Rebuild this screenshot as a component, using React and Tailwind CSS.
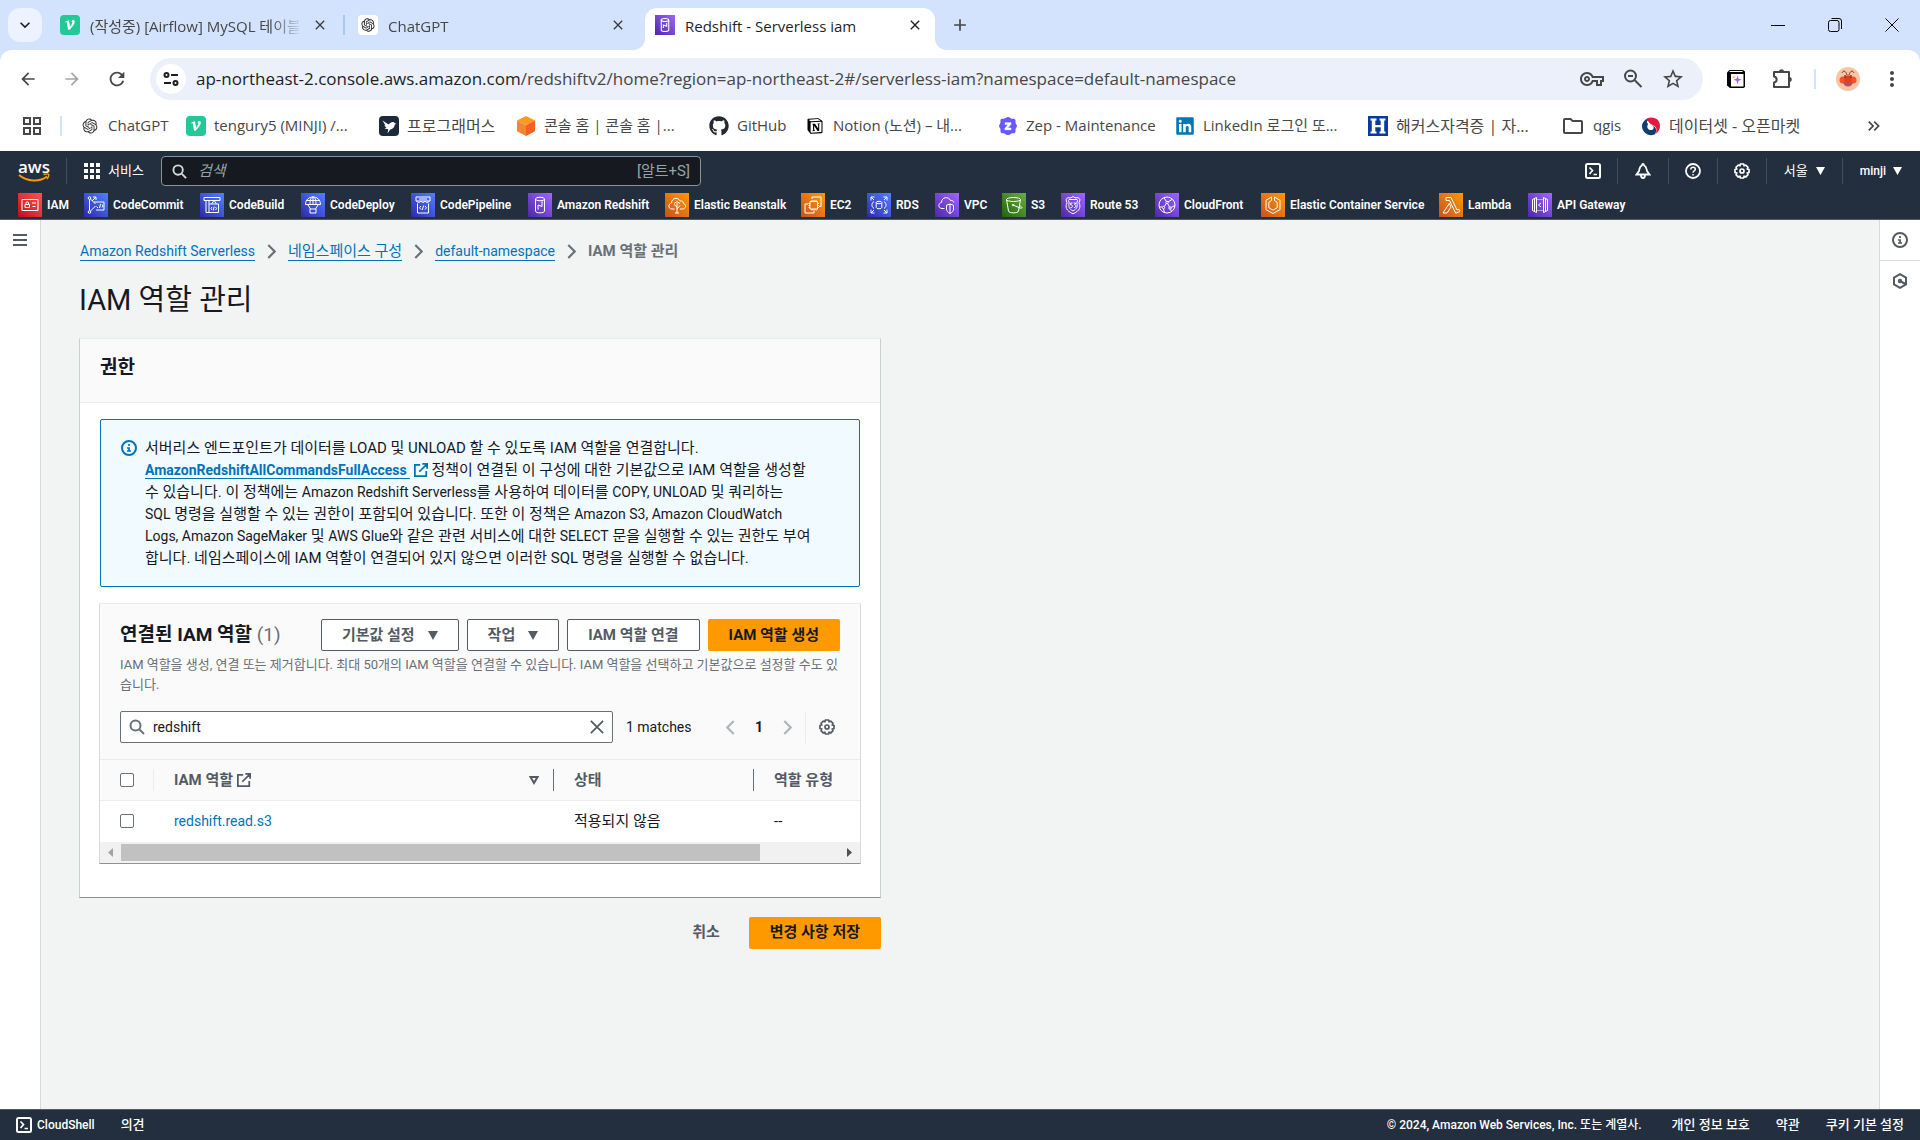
import React, { useState } from "react";
import { FaGithub, FaLinkedin } from "react-icons/fa";
import { RiNotionFill, RiOpenaiFill } from "react-icons/ri";
import {
  MdAdd,
  MdArrowBack,
  MdArrowForward,
  MdClose,
  MdKeyboardArrowDown,
  MdKeyboardDoubleArrowRight,
  MdMoreVert,
  MdOutlineFolder,
  MdOutlineVpnKey,
  MdRefresh,
  MdStarOutline,
} from "react-icons/md";

/* ---------- favicons ---------- */

const Velog = () => (
  <span className="flex size-5 shrink-0 items-center justify-center rounded-sm bg-[#20c997]">
    <svg viewBox="0 0 20 20" className="size-5" fill="#fff">
      <path d="M5.6 6.2 9 5.2l1 6.600c1.700-2 2.500-3.600 2.300-4.500-.1-.5-.5-.8-.8-1.100.3-.8 1-1.200 1.800-1.200 1 0 1.600.7 1.500 1.800-.2 2.100-2.200 5.200-5.100 7.900H8L6.800 7.300l-1.400.2z" />
    </svg>
  </span>
);

const RedshiftIcon = () => (
  <span className="flex size-5 shrink-0 items-center justify-center bg-linear-to-tr from-[#4d27a8] to-[#a166ff]">
    <svg viewBox="0 0 24 24" className="size-5" fill="none" stroke="#fff" strokeWidth="1.300">
      <ellipse cx="12" cy="6" rx="4.500" ry="1.800" />
      <path d="M7.500 6v12c0 2.500 9 2.500 9 0V6M10 15.500V12l4 1.500V9.500" />
    </svg>
  </span>
);

const Programmers = () => (
  <span className="flex size-5 shrink-0 items-center justify-center rounded-sm bg-[#1e2a3c]">
    <svg viewBox="0 0 20 20" className="size-5" fill="#fff">
      <path d="m3.500 4.500 6 4C11 7 12 6 14 6c1 0 1.500.6 1.700 1.300l1.800.5-1.700.7c-.2 3-2.300 4.500-4.600 4.900L8.500 17.500l.8-4.200-3.800-.8 2-1L5 9.500h1.500z" />
    </svg>
  </span>
);

const Cube = () => (
  <svg viewBox="0 0 20 20" className="size-5 shrink-0">
    <path d="m10 0 9 4.500-9 4.700-9-4.700z" fill="#ff9a1f" />
    <path d="M1 4.500 10 9.200V20l-9-4.700z" fill="#f58536" />
    <path d="M19 4.500 10 9.200V20l9-4.700z" fill="#f26322" />
  </svg>
);

const Zep = () => (
  <svg viewBox="0 0 20 20" className="size-5 shrink-0">
    <path
      d="M10 1c1.500 0 2.400 1.500 3.500 1.700 1.200.2 2.700-.3 3.600.7.900 1.100.2 2.500.5 3.700.3 1 1.400 1.800 1.400 3s-1.100 1.900-1.400 3c-.3 1.100.3 2.700-.6 3.600-1 1-2.400.4-3.500.7-1 .3-2 1.600-3.500 1.600s-2.500-1.300-3.500-1.600c-1.100-.3-2.600.3-3.500-.7-.9-1-.300-2.500-.6-3.600C2.100 12 1 11.200 1 10s1.100-2 1.400-3c.300-1.200-.4-2.600.5-3.700.9-1 2.400-.5 3.600-.7C7.600 2.500 8.500 1 10 1z"
      fill="#6758ff"
    />
    <path d="M7 6.700h6v1.500L9.600 12H13v1.700H6.900v-1.500l3.500-3.800H7z" fill="#fff" stroke="#fff" strokeWidth=".6" />
  </svg>
);

const Hackers = () => (
  <svg viewBox="0 0 20 20" className="size-5 shrink-0">
    <path d="M0 0h20v20H0z" fill="#0a3b9c" />
    <path d="M2.500 2.500h6v2H7.300V9h5.400V4.500h-1.200v-2h6v2h-1.300v11h1.300v2h-6v-2h1.200v-4.300H7.300v4.300h1.200v2h-6v-2h1.300v-11H2.500z" fill="#fff" />
  </svg>
);

const OpenMarket = () => (
  <svg viewBox="0 0 20 20" className="size-5 shrink-0">
    <path d="M4 4C8.500-.5 19 1 19 10c0 3.500-2 6.500-4.500 8 2-4 1-8-3-9-3.500-1-3.500-5-7.500-5z" fill="#e4193c" />
    <path d="M1 10c0-3 2-6.500 6-6.500-1.500 1.500-1.500 4.500 1.500 5 3.500.6 5.500 2 6.500 4.500.6 2-.3 4.500-1.500 5.500C7 21 1 16 1 10z" fill="#0f3e71" />
    <path d="M7.500 7.500c-1.800 2-1.500 5 .7 6.200 2 1 4.300 0 4.500-2 .1-1.600-1.200-2.700-3-3.200-.9-.2-1.700-.4-2.200-1z" fill="#fff" />
  </svg>
);

const bookmarks = [
  { label: "ChatGPT", icon: <RiOpenaiFill className="size-5 shrink-0 p-px text-[#333]" />, width: "w-[106px]" },
  { label: "tengury5 (MINJI) /...", icon: <Velog />, width: "w-[193px]" },
  { label: "프로그래머스", icon: <Programmers />, width: "w-[137px] text-[16px]" },
  { label: "콘솔 홈 | 콘솔 홈 |...", icon: <Cube />, width: "w-[193px]" },
  { label: "GitHub", icon: <FaGithub className="size-5 shrink-0 text-[#24292f]" />, width: "w-[96px]" },
  { label: "Notion (노션) – 내...", icon: <RiNotionFill className="size-5 shrink-0 text-black" />, width: "w-[193px]" },
  { label: "Zep - Maintenance", icon: <Zep />, width: "w-[177px]" },
  { label: "LinkedIn 로그인 또...", icon: <FaLinkedin className="size-5 shrink-0 text-[#0077b5]" />, width: "w-[193px]" },
  { label: "해커스자격증 | 자...", icon: <Hackers />, width: "w-[193px] text-[16px]" },
  { label: "qgis", icon: <MdOutlineFolder className="size-6 shrink-0 text-[#474747]" />, width: "w-[80px]" },
  { label: "데이터셋 - 오픈마켓", icon: <OpenMarket />, width: "w-[190px] text-[16px]" },
];

/* ---------- service icons, 24x24 white line art ---------- */

const red = "bg-linear-to-tr from-[#bd0816] to-[#ff5252]";
const blue = "bg-linear-to-tr from-[#2e27ad] to-[#527fff]";
const purple = "bg-linear-to-tr from-[#4d27a8] to-[#a166ff]";
const orange = "bg-linear-to-tr from-[#c8511b] to-[#ff9900]";
const green = "bg-linear-to-tr from-[#1b660f] to-[#6cae3e]";

const services = [
  {
    label: "IAM", color: red, width: "w-[66px]",
    art: <><path d="M4 6.500h16v11H4zM14 10h4M14.500 13.500h3M7 11.500h4.500v3H7z" /><path d="M8 11.500V10c0-1.500 2.500-1.500 2.500 0v1.500" /></>,
  },
  {
    label: "CodeCommit", color: blue, width: "w-[116px]",
    art: <><circle cx="5.500" cy="5" r="1.300" /><circle cx="5.500" cy="19" r="1.300" /><path d="M5.500 6.500v11M6.500 6l5 5M6.500 18l5-5M9 4h3v3M12 4 8 8M10 9h10v8H12M14 15l-1.500-1.500M15.500 15l1-4M18 11.500l1 1.500-1 1.500" /></>,
  },
  {
    label: "CodeBuild", color: blue, width: "w-[101px]",
    art: <path d="M4 4.500h16v3H4zM6 7.500v12h3v-12M9 11h9.500v8.500H9M11.500 11l2.500-3.500 2.500 3.500M12 14l-1 1.500 1 1.500M15.500 14l1 1.500-1 1.500M14.200 13.500l-1 4" />,
  },
  {
    label: "CodeDeploy", color: blue, width: "w-[110px]",
    art: <path d="M4.500 11.500c0-10 15-10 15 0zM9 11.500c0-5 1-7.500 3-7.500s3 2.500 3 7.500M12 4v7.500M6 7.500h12M7 12l2.500 4M17 12l-2.500 4M9 16h6v4H9z" />,
  },
  {
    label: "CodePipeline", color: blue, width: "w-[117px]",
    art: <path d="M5 4h14v4H5zM8 6h8M6 8c0 2 3 2 4 0 1 2 3 2 4 0 1 2 4 2 4 0M6.500 10.500V20h11v-9.500M10 13l-1.500 1.800L10 16.500M14 13l1.500 1.800L14 16.500M12.700 12.500l-1.500 4.500" />,
  },
  {
    label: "Amazon Redshift", color: purple, width: "w-[137px]",
    art: <><ellipse cx="12" cy="6" rx="4.500" ry="1.800" /><path d="M7.500 6v12c0 2.500 9 2.500 9 0V6M10 15.500V12l4 1.500V9.500M9.500 16h1.500M13.500 9h1.500" /></>,
  },
  {
    label: "Elastic Beanstalk", color: orange, width: "w-[136px]",
    art: <path d="M9.500 16H7c-4 0-4-5.500-.5-6 0-5 6.500-6.500 8.500-2 2-.5 3.500.5 3.500 2.500 3 1 2.500 5.500-1 5.500h-2.500M12 20V9.500M12 14l-3-2.500M12 16l3-3.500M9 10.500l3-2 3 2M10 20h4" />,
  },
  {
    label: "EC2", color: orange, width: "w-[66px]",
    art: <><path d="M9 8.500h7.500V16H9z" /><path d="M11 7v1.500M13 7v1.500M15 7v1.500M11 16v1.500M13 16v1.500M15 16v1.500M7.500 10.500H9M7.500 12.500H9M7.500 14.500H9M16.500 10.500H18M16.500 12.500H18M16.500 14.500H18M7 11H4v9h9v-2M11 6V4h9v9.500h-2" /></>,
  },
  {
    label: "RDS", color: blue, width: "w-[68px]",
    art: <><ellipse cx="12" cy="9.500" rx="2.800" ry="1.200" /><path d="M9.200 9.500v5c0 1.700 5.600 1.700 5.600 0v-5M4 7.500V4h3.500M4 4l3 3M16.500 4H20v3.500M20 4l-3 3M4 16.500V20h3.500M4 20l3-3M20 16.500V20h-3.500M20 20l-3-3M7 8.500c-2.500 1.500-3 5 0 7M17 8.500c2.500 1.500 3 5 0 7" /></>,
  },
  {
    label: "VPC", color: purple, width: "w-[67px]",
    art: <path d="M9.500 15.500H7c-4 0-4-5.500-.5-6C6.500 4 13.500 3 15.500 7.500c1.800-.3 3 .5 3.300 2M15 11l3.500 1.200v3.800c0 2-1.500 3.500-3.500 4.500-2-1-3.500-2.500-3.500-4.500v-3.800zM15 11v9" />,
  },
  {
    label: "S3", color: green, width: "w-[59px]",
    art: <><ellipse cx="11.500" cy="6.500" rx="7" ry="2" /><path d="M4.500 6.500 6.500 18c.5 2.500 9.500 2.500 10 0l2-11.500M11 12l7 3c3 .8 2.500-1-.5-2.500" /><circle cx="11" cy="12" r=".8" /></>,
  },
  {
    label: "Route 53", color: purple, width: "w-[94px]",
    art: <><path d="m12 3.500 2 1.300h3.500l1.500 2-1 3c2 4 1 8-6 11-7-3-8-7-6-11l-1-3 1.500-2H10z" /><path d="M12 6.500h4l.5 1-.7 2.500c1.200 3.500 0 6-3.800 8-3.800-2-5-4.500-3.800-8L7.500 7.500l.5-1zM11.500 10H9.700v2c2.500-.3 2.300 3-.2 2.500M12.700 10h2l-1 1.700c2 .3 1.500 3-.8 2.800" /></>,
  },
  {
    label: "CloudFront", color: purple, width: "w-[106px]",
    art: <><circle cx="12" cy="12" r="8" /><circle cx="12" cy="9.500" r="1.200" /><circle cx="8.500" cy="14.500" r="1.200" /><circle cx="15" cy="15" r="1.200" /><path d="m11.300 10.500-2 3M12.700 10.500l1.800 3.500M8.500 16l1 3.500M15.500 16.200l1 2.500M7 14H4.500M13 9l4-2.500M11.500 8.500 9 5M16 14.500l3.800-2" /></>,
  },
  {
    label: "Elastic Container Service", color: orange, width: "w-[178px]",
    art: <path d="M10.500 4 5 7.300v9.400l7 3.800 7-3.800V7.300L13.500 4v3.500l2.700 1.800v5.400L12 17.200l-4.200-2.500V9.300l2.700-1.800z" />,
  },
  {
    label: "Lambda", color: orange, width: "w-[89px]",
    art: <path d="M7 4.500h5l6 12.500 2-.8.700 2.500-4 1.500L10.500 7.500H7zM10.300 10.500 4 20h4l4-6z" />,
  },
  {
    label: "API Gateway", color: purple, width: "w-[97px]",
    art: <path d="M4.500 6.500 8.500 4.500v15l-4-2zM6.500 6v12M19.500 6.500l-4-2v15l4-2zM17.500 6v12M9.500 6.500h1M11.500 6.500h1M13.500 6.500h1M9.500 17.500h1M11.500 17.500h1M13.500 17.500h1M13 10l-2.500 2 2.500 2" />,
  },
];

/* ---------- console icons, 16x16 ---------- */

const Icon = ({ className = "size-4", children }) => (
  <svg viewBox="0 0 16 16" className={`shrink-0 ${className}`} fill="none" stroke="currentColor" strokeWidth="2">
    {children}
  </svg>
);

const InfoIcon = ({ className }) => (
  <Icon className={className}>
    <circle cx="8" cy="8" r="7" />
    <path d="M8 11V8H6M10 11H6M8 6V4" strokeWidth="1.700" />
  </Icon>
);

const External = () => (
  <Icon className="inline-block size-[14px] align-[-2px]">
    <path d="M14 9v6H1V2h6M9.500 1H15v5.500M6 10l8.500-8.500" />
  </Icon>
);

const Search = ({ className }) => (
  <Icon className={className}>
    <circle cx="6.500" cy="6.500" r="5" />
    <path d="m10.500 10.500 4.500 4.500" />
  </Icon>
);

const ShellIcon = () => (
  <Icon className="size-4">
    <rect x="1" y="1" width="14" height="14" rx="1.500" />
    <path d="m4.500 4.500 3 3-3 3.500M8.500 11.500H12" strokeWidth="1.700" />
  </Icon>
);

const Gear = () => (
  <Icon className="size-4">
    <path
      d="M6.500 1h3l.6 1.600 1.700-.5 2.100 2.100-.6 1.700L15 6.500v3l-1.700.6.600 1.700-2.100 2.100-1.700-.6L9.500 15h-3l-.6-1.700-1.700.6-2.100-2.100.6-1.700L1 9.500v-3l1.700-.6-.6-1.700 2.100-2.100 1.700.5z"
      strokeWidth="1.700"
    />
    <circle cx="8" cy="8" r="2" strokeWidth="1.700" />
  </Icon>
);

const Caret = ({ className = "w-[10px]" }) => (
  <svg viewBox="0 0 10 9" className={`shrink-0 ${className}`} fill="currentColor">
    <path d="M0 0h10L5 9z" />
  </svg>
);

const Chevron = ({ left }) => (
  <svg viewBox="0 0 8 14" className="h-[15px] w-[9px] shrink-0" fill="none" stroke="currentColor" strokeWidth="2">
    <path d={left ? "M7 1 1 7l6 6" : "m1 1 6 6-6 6"} />
  </svg>
);

/* ---------- browser ---------- */

const Tab = ({ icon, title, className }) => (
  <div className={`flex items-center ${className}`}>
    {icon}
    <span className="ml-[10px] w-[212px] overflow-hidden pt-[2px] text-[15px] whitespace-nowrap text-[#474747] mask-r-from-85%">
      {title}
    </span>
    <button aria-label="탭 닫기" className="ml-[10px] text-[#3c3c3c]">
      <MdClose className="size-4" />
    </button>
  </div>
);

const TabStrip = () => (
  <div className="flex h-[50px] items-center pl-2 text-[#1f1f1f]">
    <button aria-label="탭 검색" className="flex size-[34px] items-center justify-center rounded-xl bg-[#ecf2fe]">
      <MdKeyboardArrowDown className="size-5" />
    </button>
    <Tab icon={<Velog />} title="(작성중) [Airflow] MySQL 테이블" className="ml-[18px] w-[283px]" />
    <div className="h-5 w-[2px] bg-[#a8c7fa]" />
    <Tab
      icon={
        <span className="flex size-5 shrink-0 items-center justify-center rounded-sm bg-white">
          <RiOpenaiFill className="size-4" />
        </span>
      }
      title="ChatGPT"
      className="ml-[13px] w-[287px]"
    />
    <div className="relative mt-2 flex h-[42px] w-[290px] items-center rounded-t-xl bg-white pb-2 pl-[10px]">
      <svg viewBox="0 0 12 12" className="absolute bottom-0 -left-3 size-3" fill="#fff">
        <path d="M12 0v12H0C7 12 12 7 12 0z" />
      </svg>
      <svg viewBox="0 0 12 12" className="absolute -right-3 bottom-0 size-3" fill="#fff">
        <path d="M0 0v12h12C5 12 0 7 0 0z" />
      </svg>
      <RedshiftIcon />
      <span className="ml-[10px] flex-1 pt-[2px] text-[15px] whitespace-nowrap">Redshift - Serverless iam</span>
      <button aria-label="탭 닫기" className="mr-3">
        <MdClose className="size-4" />
      </button>
    </div>
    <button aria-label="새 탭" className="ml-[15px] text-[#474747]">
      <MdAdd className="size-5" />
    </button>
    <div className="ml-auto flex items-center">
      <button aria-label="최소화" className="flex w-[57px] justify-center">
        <svg viewBox="0 0 14 14" className="size-[14px]" stroke="#000"><path d="M0 7.500h14" /></svg>
      </button>
      <button aria-label="이전 크기로" className="flex w-[57px] justify-center">
        <svg viewBox="0 0 14 14" className="size-[14px]" fill="none" stroke="#000">
          <rect x=".5" y="2.500" width="10.500" height="11" rx="2" />
          <path d="M3.500.5H11a2.500 2.500 0 0 1 2.500 2.500v8" />
        </svg>
      </button>
      <button aria-label="닫기" className="flex w-[57px] justify-center">
        <svg viewBox="0 0 14 14" className="size-[14px]" stroke="#000"><path d="m.5.5 13 13m0-13-13 13" /></svg>
      </button>
    </div>
  </div>
);

const Toolbar = () => (
  <div className="flex h-[58px] items-center pr-4 pl-[18px] text-[#474747]">
    <button aria-label="뒤로"><MdArrowBack className="size-5" /></button>
    <button aria-label="앞으로" className="ml-6 text-[#a5a5a5]"><MdArrowForward className="size-5" /></button>
    <button aria-label="새로고침" className="ml-6"><MdRefresh className="size-[22px]" /></button>
    <div className="ml-[22px] flex h-[42px] flex-1 items-center rounded-full bg-[#ebf0fa] pr-[18px] pl-1.5">
      <button aria-label="사이트 정보" className="flex size-[30px] items-center justify-center rounded-full bg-white">
        <svg viewBox="0 0 16 16" className="size-4" fill="none" stroke="#1f1f1f" strokeWidth="2">
          <circle cx="3.500" cy="4" r="2" />
          <path d="M8 4h7M1 12h7" />
          <circle cx="12.500" cy="12" r="2" />
        </svg>
      </button>
      <p className="ml-[10px] flex-1 text-[17px] whitespace-nowrap">
        <span className="text-[#1f1f1f]">ap-northeast-2.console.aws.amazon.com</span>
        /redshiftv2/home?region=ap-northeast-2#/serverless-iam?namespace=default-namespace
      </p>
      <button aria-label="비밀번호"><MdOutlineVpnKey className="size-6" /></button>
      <button aria-label="축소" className="ml-[17px]">
        <svg viewBox="0 0 24 24" className="size-6" fill="none" stroke="currentColor" strokeWidth="2">
          <circle cx="9.500" cy="9" r="5.500" />
          <path d="m13.500 13 7 7M7 9h5" />
        </svg>
      </button>
      <button aria-label="북마크" className="ml-4"><MdStarOutline className="size-6" /></button>
    </div>
    <button aria-label="Notion 클리퍼" className="ml-[23px]">
      <svg viewBox="0 0 20 20" className="size-5">
        <path d="M1 3.500 3.500 1H17l2 1.500V18l-1.500 1H4l-3-2.500z" fill="#000" />
        <path d="M5 5h12.500v12.500H5zM3 2.800 4 2h12l1.200 1H5z" fill="#fff" />
        <path d="m11.500 6.500 1 3.300 3.200 1-3.200 1-1 3.700-1-3.700-3.200-1 3.200-1z" fill="#a05cf0" />
        <path d="m8 6 .5 1.500L10 8l-1.500.5L8 10l-.5-1.500L6 8l1.500-.5z" fill="#f6b24a" />
      </svg>
    </button>
    <button aria-label="확장 프로그램" className="ml-6">
      <svg viewBox="0 0 24 24" className="size-6" fill="none" stroke="currentColor" strokeWidth="2" strokeLinejoin="round">
        <path d="M4 5h15v15H4v-4.500c3.500-.5 3.500-5.500 0-6z" />
        <path d="M9 4.500c0-3 5-3 5 0zM19.500 10c3 0 3 5 0 5z" fill="currentColor" stroke="none" />
      </svg>
    </button>
    <div className="ml-5 h-5 w-[2px] bg-[#d3e3fd]" />
    <button aria-label="프로필" className="ml-5">
      <svg viewBox="0 0 24 24" className="size-6">
        <circle cx="12" cy="12" r="12" fill="#f6c5a4" />
        <path d="M11 8C9.500 3 7 3.500 6 6M13 8c1.500-5 4-4.500 5-2" stroke="#6b3a2a" fill="none" />
        <circle cx="7" cy="13" r="3.500" fill="#f4502c" />
        <circle cx="17" cy="13" r="3.500" fill="#f4502c" />
        <path d="M7 15c1 6 9 6 10 0z" fill="#b0525a" />
        <circle cx="12" cy="12" r="3.800" fill="#ea3a20" />
        <path d="M9 8v3M15 8v3" stroke="#4a2018" />
      </svg>
    </button>
    <button aria-label="메뉴" className="ml-5"><MdMoreVert className="size-6" /></button>
  </div>
);

const Bookmarks = () => (
  <nav className="flex h-[43px] items-center pr-9 pb-2 pl-[22px] text-[15px] text-[#474747]">
    <button aria-label="앱">
      <svg viewBox="0 0 20 20" className="size-5" fill="none" stroke="#474747" strokeWidth="2">
        <path d="M2 2h6v6H2zM12 2h6v6h-6zM2 12h6v6H2zM12 12h6v6h-6z" />
      </svg>
    </button>
    <div className="mr-[18px] ml-[18px] h-5 w-[2px] bg-[#d3e3fd]" />
    {bookmarks.map((b) => (
      <a key={b.label} href="#" className={`flex shrink-0 items-center gap-2 whitespace-nowrap ${b.width}`}>
        {b.icon}
        {b.label}
      </a>
    ))}
    <button aria-label="북마크 더보기" className="ml-auto"><MdKeyboardDoubleArrowRight className="size-5" /></button>
  </nav>
);

/* ---------- aws console ---------- */

const NavDivider = () => <div className="h-[26px] w-px bg-[#414d5c]" />;

const ConsoleHeader = () => (
  <header className="border-b border-[#545b64] bg-[#232f3e] text-white">
    <div className="flex h-10 items-center px-[18px]">
      <a href="#" aria-label="aws" className="w-[32px] text-center font-['Open_Sans'] text-[17px] leading-3 font-semibold">
        aws
        <svg viewBox="0 0 32 9" className="w-8" fill="none" stroke="#ff9900" strokeWidth="2">
          <path d="M1 2c8 7 21 7 28 1.500" />
          <path d="M25.500 1.500c3-.8 5-.6 5.200 0S30.500 4 29 6" strokeWidth="1.500" />
        </svg>
      </a>
      <div className="mr-[17px] ml-4"><NavDivider /></div>
      <button className="flex items-center gap-2 text-[13px] whitespace-nowrap">
        <svg viewBox="0 0 16 16" className="size-4" fill="#fff">
          <path d="M0 0h4v4H0zM6 0h4v4H6zM12 0h4v4h-4zM0 6h4v4H0zM6 6h4v4H6zM12 6h4v4h-4zM0 12h4v4H0zM6 12h4v4H6zM12 12h4v4h-4z" />
        </svg>
        서비스
      </button>
      <label className="ml-[17px] flex h-[30px] w-[540px] items-center rounded-sm border border-[#879596] bg-[#16191f] px-[10px]">
        <Search className="size-[15px] text-[#d5dbdb]" />
        <input
          type="search"
          aria-label="검색"
          placeholder="검색"
          className="ml-[11px] min-w-0 flex-1 bg-transparent text-[15px] outline-none placeholder:text-[#95a5a6] placeholder:italic"
        />
        <span className="text-[15px] text-[#95a5a6]">[알트+S]</span>
      </label>
      <div className="ml-auto flex items-center">
        <button aria-label="CloudShell" className="mr-4"><ShellIcon /></button>
        <NavDivider />
        <button aria-label="알림" className="mx-[17px]">
          <Icon>
            <path d="M8 1c.8 0 1 .8 1.200 1.500C11.500 3.500 11.500 6 12 8l2.500 3.500h-13L4 8c.5-2 .5-4.500 2.800-5.500C7 1.800 7.200 1 8 1zM6 12c0 4 4 4 4 0" strokeWidth="1.800" />
          </Icon>
        </button>
        <NavDivider />
        <button aria-label="도움말" className="mx-4">
          <Icon>
            <circle cx="8" cy="8" r="7" strokeWidth="1.800" />
            <path d="M5.800 6.500c0-3 4.500-2.800 4.500-.2C10.300 8 8 7.800 8 9.700M8 11v1.500" strokeWidth="1.500" />
          </Icon>
        </button>
        <NavDivider />
        <button aria-label="설정" className="mx-4"><Gear /></button>
        <NavDivider />
        <button className="mx-[17px] flex items-center gap-2 text-[13px]">서울 <Caret className="w-[9px]" /></button>
        <NavDivider />
        <button className="ml-[17px] flex items-center gap-[7px] text-[12px] font-medium">minji <Caret className="w-[9px]" /></button>
      </div>
    </div>
    <nav className="flex h-7 items-center pl-[18px] text-[12px] font-semibold">
      {services.map((s) => (
        <a key={s.label} href="#" className={`flex shrink-0 items-center gap-[5px] whitespace-nowrap ${s.width}`}>
          <svg viewBox="0 0 24 24" className={`size-6 shrink-0 ${s.color}`} fill="none" stroke="#fff" strokeWidth="1">
            {s.art}
          </svg>
          {s.label}
        </a>
      ))}
    </nav>
  </header>
);

const Crumb = ({ children }) => (
  <>
    <a href="#" className="border-b border-[#0073bb] leading-[18px] text-[#0073bb]">{children}</a>
    <span className="text-[#687078]"><Chevron /></span>
  </>
);

const secondary = "flex h-8 items-center rounded-xs border border-[#545b64] bg-white px-5 text-[15px] font-bold text-[#545b64]";
const primary = "flex h-8 items-center rounded-xs bg-[#ff9900] px-[21px] text-[15px] font-bold text-[#16191f]";

const Checkbox = ({ label }) => (
  <input
    type="checkbox"
    aria-label={label}
    className="block size-[14px] appearance-none rounded-xs border border-[#687078] bg-white checked:bg-[#0073bb]"
  />
);

const RolesTable = () => {
  const [query, setQuery] = useState("redshift");

  return (
    <section className="-mx-px mt-4 border border-x-[#d5dbdb] border-t-[#eaeded] border-b-[#879596]">
      <div className="bg-[#fafafa] px-5 pt-[15px] pb-4">
        <div className="flex items-center gap-2 whitespace-nowrap">
          <h3 className="flex-1 text-[19px] leading-7 font-bold">
            연결된 IAM 역할 <span className="font-normal text-[#687078]">(1)</span>
          </h3>
          <button className={secondary}>기본값 설정 <Caret className="ml-[13px] w-[10px]" /></button>
          <button className={secondary}>작업 <Caret className="ml-[13px] w-[10px]" /></button>
          <button className={secondary}>IAM 역할 연결</button>
          <button className={primary}>IAM 역할 생성</button>
        </div>
        <p className="mt-1 text-[13px] leading-5 whitespace-nowrap text-[#687078]">
          IAM 역할을 생성, 연결 또는 제거합니다. 최대 50개의 IAM 역할을 연결할 수 있습니다. IAM 역할을 선택하고 기본값으로 설정할 수도 있
          <br />
          습니다.
        </p>
        <div className="mt-4 flex h-8 items-center text-[14px]">
          <label className="flex h-8 flex-1 items-center rounded-xs border border-[#687078] bg-white px-2 text-[#545b64]">
            <Search className="size-4 text-[#687078]" />
            <input
              type="text"
              aria-label="역할 찾기"
              value={query}
              onChange={(e) => setQuery(e.target.value)}
              className="ml-2 min-w-0 flex-1 bg-transparent text-[#16191f] outline-none"
            />
            <button type="button" aria-label="지우기" onClick={() => setQuery("")}>
              <Icon className="size-[14px]"><path d="m1 1 14 14M15 1 1 15" /></Icon>
            </button>
          </label>
          <span className="ml-[13px] w-[100px] whitespace-nowrap">1 matches</span>
          <div className="flex items-center text-[#aab7b8]">
            <button aria-label="이전 페이지"><Chevron left /></button>
            <button className="mx-5 w-2 font-bold text-[#16191f]">1</button>
            <button aria-label="다음 페이지"><Chevron /></button>
          </div>
          <div className="mx-[13px] h-8 w-px bg-[#eaeded]" />
          <button aria-label="기본 설정" className="mr-[5px] text-[#545b64]"><Gear /></button>
        </div>
      </div>
      <div className="overflow-hidden">
        <table className="w-full min-w-[856px] table-fixed text-left text-[15px]">
          <thead className="border-y border-[#eaeded] bg-[#fafafa] text-[#545b64]">
            <tr className="h-[41px]">
              <th className="w-[54px] p-0">
                <div className="flex h-[22px] items-center border-r border-[#eaeded] pl-5"><Checkbox label="모두 선택" /></div>
              </th>
              <th className="w-[400px] p-0">
                <div className="flex h-[22px] items-center gap-1 border-r border-[#687078] pr-[14px] pl-5">
                  IAM 역할 <External />
                  <svg viewBox="0 0 10 9" className="ml-auto w-[10px]" fill="none" stroke="currentColor" strokeWidth="2">
                    <path d="M1.500 1h7L5 7z" />
                  </svg>
                </div>
              </th>
              <th className="w-[200px] p-0">
                <div className="h-[22px] border-r border-[#687078] pl-5 leading-[22px]">상태</div>
              </th>
              <th className="p-0 pl-5">역할 유형</th>
            </tr>
          </thead>
          <tbody>
            <tr className="h-[41px]">
              <td className="p-0 pl-5"><Checkbox label="redshift.read.s3 선택" /></td>
              <td className="p-0 pl-5"><a href="#" className="text-[14px] text-[#0073bb]">redshift.read.s3</a></td>
              <td className="p-0 pl-5">적용되지 않음</td>
              <td className="p-0 pl-5">--</td>
            </tr>
          </tbody>
        </table>
      </div>
      <div className="flex h-[21px] items-center bg-[#f1f1f1] py-[2px]">
        <button aria-label="왼쪽으로 스크롤" className="flex w-[21px] justify-center">
          <svg viewBox="0 0 5 9" className="h-[9px] w-[5px]" fill="#a3a3a3"><path d="M5 0v9L0 4.500z" /></svg>
        </button>
        <div className="h-full flex-1">
          <div className="h-full w-[89%] bg-[#c1c1c1]" />
        </div>
        <button aria-label="오른쪽으로 스크롤" className="flex w-[21px] justify-center">
          <svg viewBox="0 0 5 9" className="h-[9px] w-[5px]" fill="#505050"><path d="M0 0v9l5-4.500z" /></svg>
        </button>
      </div>
    </section>
  );
};

// latin runs sit one step smaller than the hangul around them
const En = ({ children }) => <span className="text-[14px]">{children}</span>;

const App = () => {
  return (
    <div className="flex min-h-screen flex-col bg-[#f2f3f3] font-[Roboto,'Noto_Sans_CJK_KR',sans-serif] text-[#16191f]">
      <div className="bg-[#d3e3fd] font-['Open_Sans','Noto_Sans_CJK_KR',sans-serif]">
        <TabStrip />
        <div className="rounded-t-xl bg-white">
          <Toolbar />
          <Bookmarks />
        </div>
      </div>

      <ConsoleHeader />

      <div className="flex flex-1">
        <aside className="w-[41px] shrink-0 border-r border-[#d5dbdb] bg-white">
          <button aria-label="탐색 열기" className="mt-[13px] ml-[13px] block">
            <svg viewBox="0 0 14 14" className="size-[14px]" stroke="#545b64" strokeWidth="2"><path d="M0 2h14M0 7h14M0 12h14" /></svg>
          </button>
        </aside>

        <main className="min-w-0 flex-1 px-[38px] pt-5">
          <nav className="flex h-[22px] items-center gap-3 pl-px text-[14px] whitespace-nowrap">
            <Crumb>Amazon Redshift Serverless</Crumb>
            <Crumb><span className="text-[15px]">네임스페이스 구성</span></Crumb>
            <Crumb>default-namespace</Crumb>
            <span className="text-[15px] font-bold text-[#687078]">IAM 역할 관리</span>
          </nav>
          <h1 className="mt-5 text-[29px] leading-9">IAM 역할 관리</h1>

          <div className="max-w-[802px]">
            <section className="mt-5 border border-x-[#c8cfcf] border-t-[#eaeded] border-b-[#879596] bg-white">
              <h2 className="border-b border-[#eaeded] bg-[#fafafa] px-5 pt-3 pb-[17px] text-[19px] leading-[34px] font-bold">권한</h2>
              <div className="px-5 pt-4 pb-[33px]">
                <div className="flex gap-2 rounded-xs border border-[#0073bb] bg-[#f1faff] px-5 py-[17px] text-[15px] leading-[22px] whitespace-nowrap">
                  <span className="mt-[3px] text-[#0073bb]"><InfoIcon className="size-4" /></span>
                  <p>
                    서버리스 엔드포인트가 데이터를 LOAD 및 UNLOAD 할 수 있도록 IAM 역할을 연결합니다.
                    <br />
                    <a href="#" className="text-[14px] font-bold text-[#0073bb]">
                      <span className="border-b border-[#0073bb]">AmazonRedshiftAllCommandsFullAccess&nbsp;</span> <External />
                    </a>{" "}
                    정책이 연결된 이 구성에 대한 기본값으로 IAM 역할을 생성할
                    <br />
                    수 있습니다. 이 정책에는 <En>Amazon Redshift Serverless</En>를 사용하여 데이터를 <En>COPY, UNLOAD</En> 및 쿼리하는
                    <br />
                    <En>SQL</En> 명령을 실행할 수 있는 권한이 포함되어 있습니다. 또한 이 정책은 <En>Amazon S3, Amazon CloudWatch</En>
                    <br />
                    <En>Logs, Amazon SageMaker</En> 및 <En>AWS Glue</En>와 같은 관련 서비스에 대한 <En>SELECT</En> 문을 실행할 수 있는 권한도 부여
                    <br />
                    합니다. 네임스페이스에 IAM 역할이 연결되어 있지 않으면 이러한 SQL 명령을 실행할 수 없습니다.
                  </p>
                </div>
                <RolesTable />
              </div>
            </section>
            <div className="mt-[19px] flex justify-end gap-2">
              <button className="h-8 px-[21px] text-[15px] font-bold text-[#545b64]">취소</button>
              <button className={primary}>변경 사항 저장</button>
            </div>
          </div>
        </main>

        <aside className="w-[41px] shrink-0 border-l border-[#d5dbdb] bg-white text-[#545b64]">
          <button aria-label="정보" className="flex h-[41px] w-full items-center justify-center border-b border-[#d5dbdb]">
            <InfoIcon className="size-4" />
          </button>
          <button aria-label="진단" className="flex h-10 w-full items-center justify-center">
            <Icon><path d="M8 1.200 14 4.500v7l-6 3.300-6-3.300v-7zM8 8l5.500 3" /><circle cx="8" cy="8" r="1.200" /></Icon>
          </button>
        </aside>
      </div>

      <footer className="flex h-[31px] items-center border-t border-[#545b64] bg-[#232f3e] px-4 text-[12px] font-medium whitespace-nowrap text-white">
        <a href="#" className="flex items-center gap-[5px]"><ShellIcon /> CloudShell</a>
        <a href="#" className="ml-[26px] text-[13px]">의견</a>
        <span className="ml-auto">© 2024, Amazon Web Services, Inc. 또는 계열사.</span>
        <a href="#" className="ml-[30px] text-[13px]">개인 정보 보호</a>
        <a href="#" className="ml-[26px] text-[13px]">약관</a>
        <a href="#" className="ml-[26px] text-[13px]">쿠키 기본 설정</a>
      </footer>
    </div>
  );
};

export default App;
